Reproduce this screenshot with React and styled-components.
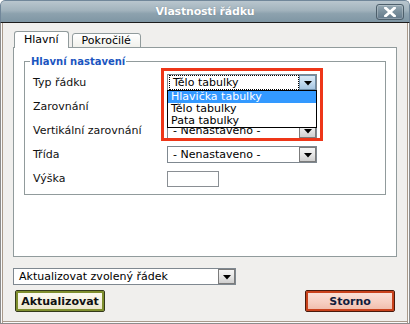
import React from "react";
import styled, { createGlobalStyle, css } from "styled-components";

const Global = createGlobalStyle`
  html, body { margin: 0; padding: 0; background: #ffffff; }
  body { font-family: "DejaVu Sans", Verdana, sans-serif; font-size: 11px; color: #000; }
  * { box-sizing: border-box; }
`;

const Window = styled.div`
  width: 410px;
  height: 324px;
  display: flex;
  flex-direction: column;
  border-radius: 5px 5px 0 0;
  overflow: hidden;
  background: #f0efed;
`;

const TitleBar = styled.div`
  height: 23px;
  flex: none;
  display: grid;
  grid-template-columns: 1fr auto 1fr;
  align-items: center;
  background: linear-gradient(#b9c6ce 0%, #a2b3bd 45%, #8da2ae 60%, #7f96a4 100%);
  border: 1px solid #71879a;
  border-bottom: 1px solid #1c1c1c;
  border-radius: 5px 5px 0 0;
`;

const Title = styled.div`
  grid-column: 2;
  color: #fff;
  font-weight: bold;
  font-size: 11px;
  letter-spacing: -0.2px;
  text-shadow: 0 0 1px rgba(50, 70, 85, 0.5);
`;

const CloseButton = styled.div`
  grid-column: 3;
  justify-self: end;
  margin-right: 5px;
  width: 28px;
  height: 16px;
  border: 1px solid #4d5f6b;
  border-radius: 3px;
  background: linear-gradient(#97a9b4 0%, #7a8f9c 50%, #63798a 100%);
  box-shadow: inset 0 0 0 1px rgba(255, 255, 255, 0.25);
  display: flex;
  align-items: center;
  justify-content: center;
`;

const Frame = styled.div`
  flex: 1;
  display: flex;
  flex-direction: column;
  padding: 8px 12px 0;
  border: 1px solid #8c8c8c;
  border-top: none;
  box-shadow: inset 1px 0 0 #fafafa, inset 2px 0 0 #a99a8b,
    inset -1px 0 0 #fafafa, inset -2px 0 0 #a99a8b,
    inset 0 -1px 0 #fafafa, inset 0 -2px 0 #a99a8b;
`;

const TabRow = styled.div`
  display: flex;
  align-items: flex-end;
  gap: 3px;
  height: 17px;
  margin: 0 0 -1px 1px;
  position: relative;
  z-index: 1;
`;

const Tab = styled.div`
  padding: 0 9px;
  border: 1px solid #919b9c;
  border-radius: 3px 3px 0 0;
  display: flex;
  align-items: center;
  ${(p) =>
    p.$active
      ? css`
          height: 17px;
          background: #fff;
          border-bottom: none;
          padding-bottom: 1px;
        `
      : css`
          height: 15px;
          background: linear-gradient(#ffffff, #f1f1ec);
        `}
`;

const Panel = styled.div`
  height: 210px;
  flex: none;
  background: #fff;
  border: 1px solid #919b9c;
  padding: 7px 10px 0;
  position: relative;
`;

const Fieldset = styled.fieldset`
  margin: 0;
  padding: 0 8px 7px 8px;
  border: 1px solid #919b9c;
`;

const Legend = styled.legend`
  padding: 0 1px;
  margin-left: -3px;
  line-height: 13px;
  font-size: 10px;
  color: #1b55c0;
  font-weight: bold;
`;

const FormGrid = styled.div`
  display: grid;
  grid-template-columns: 134px 150px;
  grid-auto-rows: 17px;
  row-gap: 7px;
  margin-top: 6px;
  align-items: center;
`;

const Label = styled.div`
  color: #111;
  white-space: nowrap;
`;

const Anchor = styled.div`
  position: relative;
`;

const SelectBox = styled.div`
  width: ${(p) => p.$width}px;
  height: 17px;
  background: #fff;
  border: 1px solid #7f8890;
  display: flex;
  align-items: center;
  padding: 0 0 0 1px;
  position: relative;
`;

const SelectText = styled.span`
  flex: 1;
  height: 15px;
  line-height: 13px;
  padding-left: 3px;
  white-space: nowrap;
  overflow: hidden;
  border: 1px solid transparent;
  ${(p) =>
    p.$focused &&
    css`
      border: 1px dotted #000;
    `}
`;

const ArrowBtn = styled.span`
  width: 17px;
  height: 15px;
  flex: none;
  display: flex;
  align-items: center;
  justify-content: center;
  padding-top: 2px;
  border: 1px solid ${(p) => (p.$active ? "#6e8ea8" : "#7b7b7b")};
  background: ${(p) =>
    p.$active
      ? "linear-gradient(#d9e9f6 0%, #c2dbef 50%, #a6c6e2 100%)"
      : "linear-gradient(#f6f6f6 0%, #e6e6e6 50%, #cfcfcf 100%)"};
`;

const DropList = styled.div`
  position: absolute;
  top: 15px;
  left: -1px;
  width: 150px;
  background: #fff;
  border: 1px solid #000;
  z-index: 3;
`;

const DropItem = styled.div`
  height: 12px;
  line-height: 12px;
  padding-left: 3px;
  white-space: nowrap;
  ${(p) =>
    p.$selected &&
    css`
      background: #3399ff;
      color: #fff;
    `}
`;

const Highlight = styled.div`
  position: absolute;
  left: -6px;
  top: -6px;
  width: 162px;
  height: 73px;
  border: 3px solid #ee3618;
  z-index: 4;
  pointer-events: none;
`;

const TextInput = styled.div`
  width: 52px;
  height: 16px;
  background: #fff;
  border: 1px solid #8a8f94;
`;

const Bottom = styled.div`
  margin-top: 11px;
`;

const ButtonRow = styled.div`
  display: flex;
  justify-content: space-between;
  margin-top: 5px;
  padding: 0 2px;
`;

const Button = styled.div`
  width: 90px;
  height: 22px;
  display: flex;
  align-items: center;
  justify-content: center;
  font-weight: bold;
  font-size: 11px;
  border-radius: 2px;
  ${(p) =>
    p.$variant === "cancel"
      ? css`
          color: #101c3c;
          border: 1px solid #4a1a0c;
          box-shadow: inset 0 0 0 2px #c9421c;
          background: linear-gradient(#fbe4dc 0%, #f6cdbf 60%, #efb9a8 100%);
        `
      : css`
          color: #111;
          border: 1px solid #33391a;
          box-shadow: inset 0 0 0 2px #7f8f2e;
          background: linear-gradient(#fdfcf4 0%, #f5f1de 60%, #e9e3c6 100%);
        `}
`;

const Triangle = () => (
  <svg width="8" height="5" viewBox="0 0 8 5">
    <polygon points="0,0 8,0 4,4.5" fill="#000" />
  </svg>
);

const Select = ({ width = 150, value, active, focused, children }) => (
  <SelectBox $width={width}>
    <SelectText $focused={focused}>{value}</SelectText>
    <ArrowBtn $active={active}>
      <Triangle />
    </ArrowBtn>
    {children}
  </SelectBox>
);

export default function App() {
  return (
    <>
      <Global />
      <Window>
        <TitleBar>
          <Title>Vlastnosti řádku</Title>
          <CloseButton>
            <svg width="12" height="10" viewBox="0 0 12 10">
              <path d="M1.5 1 L10.5 9 M10.5 1 L1.5 9" stroke="#fff" strokeWidth="2.8" strokeLinecap="square" />
            </svg>
          </CloseButton>
        </TitleBar>
        <Frame>
          <TabRow>
            <Tab $active>Hlavní</Tab>
            <Tab>Pokročilé</Tab>
          </TabRow>
          <Panel>
            <Fieldset>
              <Legend>Hlavní nastavení</Legend>
              <FormGrid>
                <Label>Typ řádku</Label>
                <Anchor>
                  <Select value="Tělo tabulky" active focused>
                    <DropList>
                      <DropItem $selected>Hlavička tabulky</DropItem>
                      <DropItem>Tělo tabulky</DropItem>
                      <DropItem>Pata tabulky</DropItem>
                    </DropList>
                  </Select>
                  <Highlight />
                </Anchor>
                <Label>Zarovnání</Label>
                <Select value="- Nenastaveno -" />
                <Label>Vertikální zarovnání</Label>
                <Select value="- Nenastaveno -" />
                <Label>Třída</Label>
                <Select value="- Nenastaveno -" />
                <Label>Výška</Label>
                <TextInput />
              </FormGrid>
            </Fieldset>
          </Panel>
          <Bottom>
            <Select width={223} value="Aktualizovat zvolený řádek" />
          </Bottom>
          <ButtonRow>
            <Button>Aktualizovat</Button>
            <Button $variant="cancel">Storno</Button>
          </ButtonRow>
        </Frame>
      </Window>
    </>
  );
}
